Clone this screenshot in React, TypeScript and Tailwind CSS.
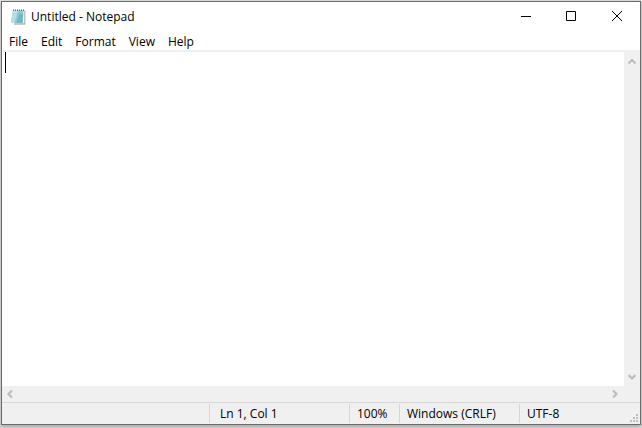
import { useState } from "react"

const menus = ["File", "Edit", "Format", "View", "Help"]

function NotepadIcon() {
  return (
    <svg width="16" height="16" viewBox="0 0 16 16" aria-hidden="true">
      <path d="M13.500 1.500h1.800v14H4v-1z" fill="#9c9182" />
      <path d="M3 1h11.500v13.500H.5z" fill="#eef5f6" />
      <path d="M3 1.500h10.500l-.8 12.500H.8z" fill="#93cbd8" />
      <path d="M3 1.500h5L4.500 14H.8z" fill="#bfe4eb" />
      <path d="M9.500 5h3.700l-.5 9H6.500z" fill="#6aafc0" opacity=".7" />
      <path d="M3 4.500h10M2.500 7h10M2 9.500h10M1.500 12h11" stroke="#62aabd" strokeWidth=".5" opacity=".5" />
      <path d="M3.500 .5v1.500M5.500 .5v1.500M7.500 .5v1.500M9.500 .5v1.500M11.500 .5v1.500M13.500 .5v1.500" stroke="#5d686b" />
    </svg>
  )
}

function Chevron({ d }: { d: string }) {
  return (
    <svg width="8" height="8" viewBox="0 0 8 8" fill="none" stroke="#bdbdbd" strokeWidth="2.2" aria-hidden="true">
      <path d={d} />
    </svg>
  )
}

function Grip() {
  return (
    <svg width="8" height="8" viewBox="0 0 8 8" fill="#bfbfbf" shapeRendering="crispEdges" aria-hidden="true">
      <path d="M6 0h2v2H6zM3 3h2v2H3zM6 3h2v2H6zM0 6h2v2H0zM3 6h2v2H3zM6 6h2v2H6z" />
    </svg>
  )
}

function CaptionButton({ label, d }: { label: string; d: string }) {
  return (
    <button aria-label={label} className="flex w-[46px] items-center justify-center pb-0.5 hover:bg-gray-200">
      <svg className="overflow-visible" width="10" height="10" viewBox="0 0 10 10" fill="none" stroke="#000" aria-hidden="true">
        <path d={d} />
      </svg>
    </button>
  )
}

export default function App() {
  const [text, setText] = useState("")

  return (
    <div className="h-screen bg-[#dedede] px-px pt-px pb-[3px] font-['Open_Sans',sans-serif] text-[12px] leading-4 text-black">
      <div className="flex h-full flex-col border border-[#6b6b6b] bg-white shadow-[0_2px_4px_rgba(0,0,0,0.25)]">
        <header className="flex h-[30px] shrink-0 justify-between">
          <div className="flex items-center gap-[5px] pl-2">
            <NotepadIcon />
            <h1>Untitled - Notepad</h1>
          </div>
          <div className="flex">
            <CaptionButton label="Minimize" d="M1 5.5h10" />
            <CaptionButton label="Maximize" d="M.5.5h9v9h-9z" />
            <CaptionButton label="Close" d="M0 0l10 10M10 0L0 10" />
          </div>
        </header>

        <nav className="flex h-5 shrink-0 gap-px border-b-2 border-[#f0f0f0] pl-px">
          {menus.map(m => (
            <button key={m} className="px-1.5 pt-0.5 hover:bg-sky-100">{m}</button>
          ))}
        </nav>

        <main className="flex min-h-0 flex-1">
          <div className="relative flex-1">
            <textarea
              aria-label="Text editor"
              value={text}
              onChange={e => setText(e.target.value)}
              className="block h-full w-full resize-none overflow-hidden px-[3px] font-['Liberation_Mono',monospace] text-[16px] caret-transparent outline-none"
            />
            {text === "" && <span className="absolute top-0 left-[3px] h-[21px] w-px bg-black" />}
          </div>
          <div className="flex w-4 flex-col justify-between bg-[#f0f0f0] py-[5px]">
            <button aria-label="Scroll up" className="flex justify-center"><Chevron d="M.5 6.500l3.500-3.500 3.500 3.500" /></button>
            <button aria-label="Scroll down" className="flex justify-center"><Chevron d="M.5 2l3.500 3.500 3.500-3.500" /></button>
          </div>
        </main>

        <div className="flex h-4 shrink-0 items-center justify-between bg-[#f0f0f0] pr-[21px] pl-1">
          <button aria-label="Scroll left" className="pb-px"><Chevron d="M6 .5L2.500 4l3.500 3.500" /></button>
          <button aria-label="Scroll right" className="pb-px"><Chevron d="M2 .5l3.500 3.500-3.500 3.500" /></button>
        </div>

        <footer className="flex h-[22px] shrink-0 border-t border-[#d7d7d7] bg-[#f0f0f0] py-px *:border-[#d7d7d7] *:pt-0.5">
          <span className="flex-1" />
          <span className="w-[140px] border-l pl-2.5">Ln 1, Col 1</span>
          <span className="w-[50px] border-l pl-[7px]">100%</span>
          <span className="w-[120px] border-l pl-[7px]">Windows (CRLF)</span>
          <div className="flex w-[121px] items-end justify-between border-l pr-0.5 pb-px pl-[7px]">
            <span>UTF-8</span>
            <Grip />
          </div>
        </footer>
      </div>
    </div>
  )
}
